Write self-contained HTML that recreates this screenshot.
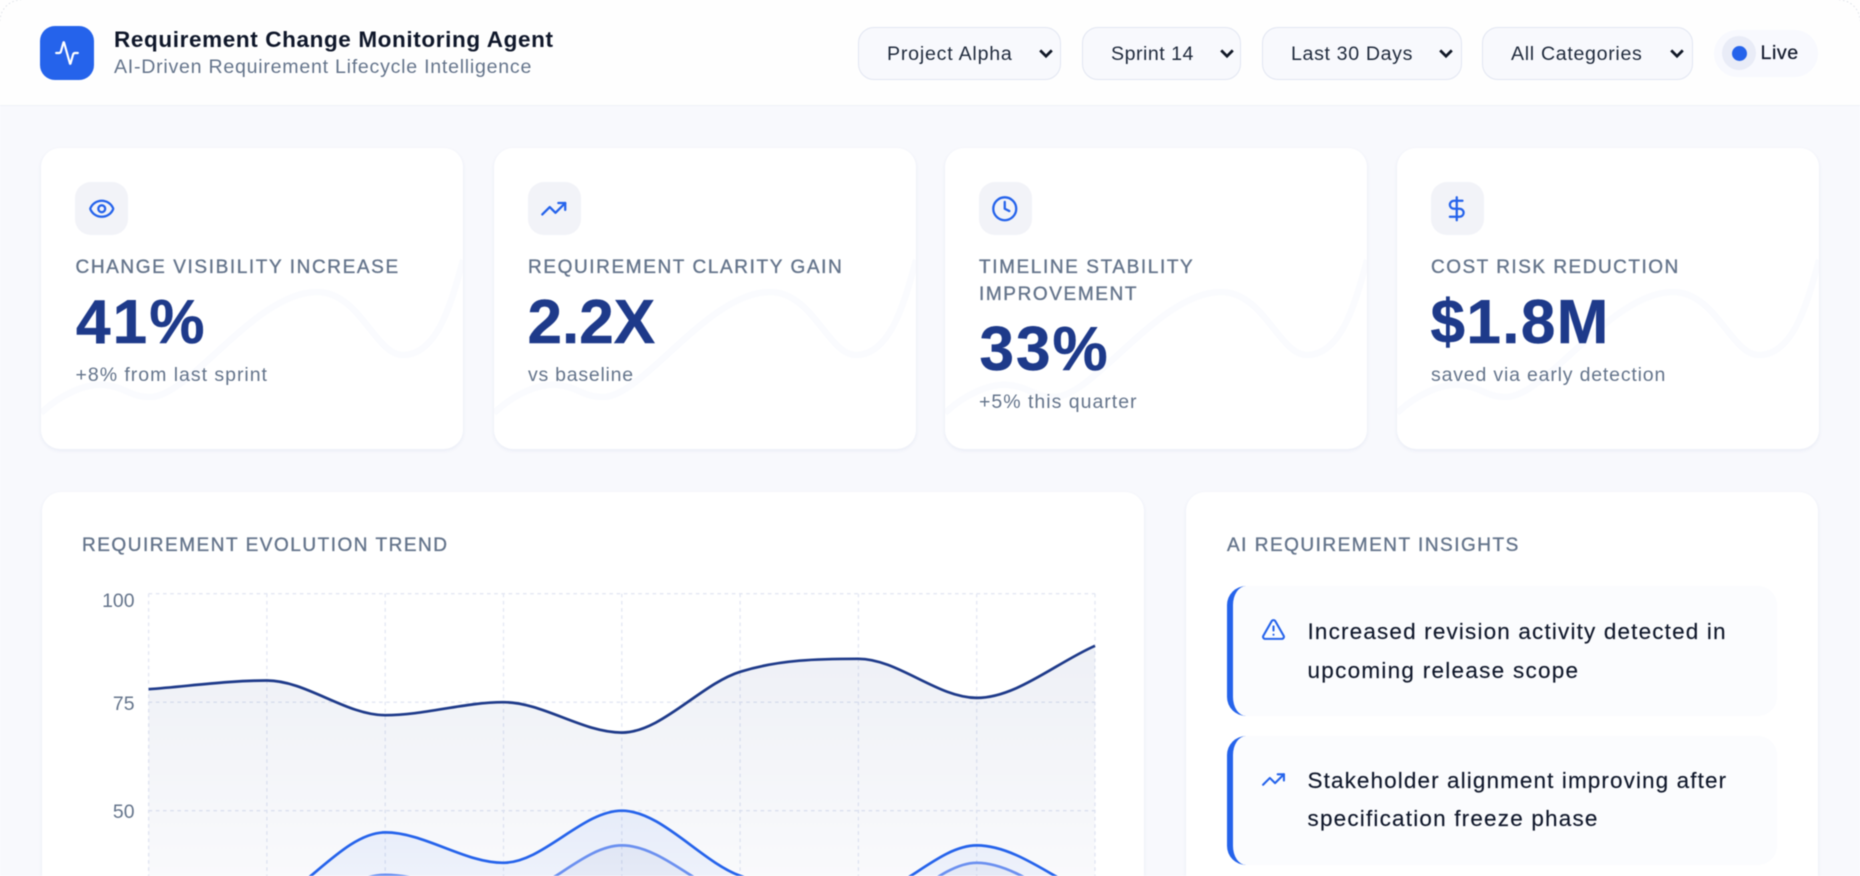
<!DOCTYPE html>
<html>
<head>
<meta charset="utf-8">
<title>Requirement Change Monitoring Agent</title>
<style>
html,body{margin:0;padding:0;width:1860px;height:876px;overflow:hidden;background:#fff}
*{box-sizing:border-box}
#p{position:relative;width:1860px;height:876px;overflow:hidden;background:#f8f9fd;font-family:"Liberation Sans",sans-serif;filter:blur(.45px)}
.t{position:absolute;white-space:nowrap}
#hd{position:absolute;left:0;top:0;width:1860px;height:106px;background:#fefefe;border-bottom:1.5px solid #eff1f8}
#logo{position:absolute;left:40px;top:26px;width:54px;height:54px;border-radius:15px;background:#2563eb}
#logo svg{position:absolute;left:14px;top:14px}
.sel{position:absolute;top:27px;height:53px;background:#f8f9fd;border:1.6px solid #e2e6f2;border-radius:16px}
.st{font-size:19.6px;line-height:24px;color:#1e293b;top:41.5px}
.chev{position:absolute;top:48px}
#live{position:absolute;left:1714px;top:30px;width:104px;height:47px;border-radius:24px;background:#f8f9fe}
#ring{position:absolute;left:1722px;top:36px;width:34px;height:34px;border-radius:50%;background:#e9ecf7}
#dot{position:absolute;left:1731.5px;top:45.5px;width:15px;height:15px;border-radius:50%;background:#2563eb}
.card{position:absolute;top:148px;width:422px;height:301px;background:#fff;border-radius:19px;box-shadow:0 1.5px 4px rgba(30,58,138,.07);overflow:hidden}
.card svg.w{position:absolute;left:0;top:0}
.ib{position:absolute;left:34px;top:34px;width:53px;height:53px;border-radius:16px;background:#f2f3f8}
.ib svg{position:absolute;left:12.75px;top:12.75px}
.lb{left:34.5px;font-size:19px;line-height:27px;color:#64748b;letter-spacing:1.6px;-webkit-text-stroke:.35px #64748b}
.vl{left:34px;font-size:62px;line-height:70px;font-weight:700;color:#1e3a8a;-webkit-text-stroke:.5px #1e3a8a}
.sb{left:34.5px;font-size:19.5px;line-height:24px;color:#64748b}
.panel{position:absolute;top:492px;height:384px;background:#fff;border-radius:19px 19px 0 0;box-shadow:0 1.5px 4px rgba(30,58,138,.07)}
.pt{font-size:19px;line-height:24px;top:534px;color:#64748b;letter-spacing:1.52px;-webkit-text-stroke:.35px #64748b}
.ins{position:absolute;left:1227px;width:550px;background:#fbfcfe;border-left:6.2px solid #2563eb;border-radius:19px}
.it{left:1307.5px;font-size:22.5px;line-height:38px;color:#0f172a;-webkit-text-stroke:.15px #0f172a}
.yl{right:1725.5px;font-size:19.4px;line-height:24px;color:#64748b}
</style>
</head>
<body>
<div id="p">
  <div id="hd"></div>
  <div id="logo"><svg width="26" height="26" viewBox="0 0 24 24" fill="none" stroke="#fff" stroke-width="2" stroke-linecap="round" stroke-linejoin="round"><path d="M22 12h-2.48a2 2 0 0 0-1.93 1.46l-2.35 8.36a.25.25 0 0 1-.48 0L9.24 2.18a.25.25 0 0 0-.48 0l-2.35 8.36A2 2 0 0 1 4.49 12H2"/></svg></div>
  <div class="t" style="left:114px;top:27px;font-size:22.5px;line-height:26px;font-weight:700;color:#0f172a;letter-spacing:.62px">Requirement Change Monitoring Agent</div>
  <div class="t" style="left:114px;top:55px;font-size:19.6px;line-height:24px;color:#64748b;letter-spacing:.74px">AI-Driven Requirement Lifecycle Intelligence</div>

  <div class="sel" style="left:858px;width:203px"></div>
  <div class="sel" style="left:1082px;width:159px"></div>
  <div class="sel" style="left:1262px;width:200px"></div>
  <div class="sel" style="left:1482px;width:211px"></div>
  <div class="t st" style="left:887px;letter-spacing:.78px">Project Alpha</div>
  <div class="t st" style="left:1111px;letter-spacing:.5px">Sprint 14</div>
  <div class="t st" style="left:1291px;letter-spacing:.64px">Last 30 Days</div>
  <div class="t st" style="left:1511px;letter-spacing:.68px">All Categories</div>
  <svg class="chev" style="left:1038px" width="16" height="11" viewBox="0 0 16 11"><path d="M2.2 2.4 8 8.2l5.8-5.8" fill="none" stroke="#111827" stroke-width="2.8"/></svg>
  <svg class="chev" style="left:1219px" width="16" height="11" viewBox="0 0 16 11"><path d="M2.2 2.4 8 8.2l5.8-5.8" fill="none" stroke="#111827" stroke-width="2.8"/></svg>
  <svg class="chev" style="left:1438px" width="16" height="11" viewBox="0 0 16 11"><path d="M2.2 2.4 8 8.2l5.8-5.8" fill="none" stroke="#111827" stroke-width="2.8"/></svg>
  <svg class="chev" style="left:1669px" width="16" height="11" viewBox="0 0 16 11"><path d="M2.2 2.4 8 8.2l5.8-5.8" fill="none" stroke="#111827" stroke-width="2.8"/></svg>

  <div id="live"></div><div id="ring"></div><div id="dot"></div>
  <div class="t" style="left:1760.5px;top:41px;font-size:19.6px;line-height:24px;color:#0f172a;letter-spacing:.55px;-webkit-text-stroke:.25px #0f172a">Live</div>

  <!-- KPI cards -->
  <div class="card" style="left:41px">
    <svg class="w" width="422" height="301" fill="none"><path d="M0 265C19 247 44 235 64 237C84 239 89 249 109 249C149 249 214 144 276 144C319 144 334 207 362 207C394 207 409 162 422 112" stroke="#fafbfe" stroke-width="6.5"/></svg>
    <div class="ib"><svg width="27.5" height="27.5" viewBox="0 0 24 24" fill="none" stroke="#2563eb" stroke-width="2" stroke-linecap="round" stroke-linejoin="round"><path d="M2.062 12.348a1 1 0 0 1 0-.696 10.75 10.75 0 0 1 19.876 0 1 1 0 0 1 0 .696 10.75 10.75 0 0 1-19.876 0"/><circle cx="12" cy="12" r="3"/></svg></div>
    <div class="t lb" style="top:106px">CHANGE VISIBILITY INCREASE</div>
    <div class="t vl" style="left:35px;top:140px;letter-spacing:2.2px">41%</div>
    <div class="t sb" style="top:215px;letter-spacing:.98px">+8% from last sprint</div>
  </div>
  <div class="card" style="left:493.5px">
    <svg class="w" width="422" height="301" fill="none"><path d="M0 265C19 247 44 235 64 237C84 239 89 249 109 249C149 249 214 144 276 144C319 144 334 207 362 207C394 207 409 162 422 112" stroke="#fafbfe" stroke-width="6.5"/></svg>
    <div class="ib"><svg width="27.5" height="27.5" viewBox="0 0 24 24" fill="none" stroke="#2563eb" stroke-width="2" stroke-linecap="round" stroke-linejoin="round"><path d="M16 7h6v6"/><path d="m22 7-8.5 8.5-5-5L2 17"/></svg></div>
    <div class="t lb" style="top:106px">REQUIREMENT CLARITY GAIN</div>
    <div class="t vl" style="top:140px;letter-spacing:0">2.2X</div>
    <div class="t sb" style="top:215px;letter-spacing:.75px">vs baseline</div>
  </div>
  <div class="card" style="left:944.5px">
    <svg class="w" width="422" height="301" fill="none"><path d="M0 265C19 247 44 235 64 237C84 239 89 249 109 249C149 249 214 144 276 144C319 144 334 207 362 207C394 207 409 162 422 112" stroke="#fafbfe" stroke-width="6.5"/></svg>
    <div class="ib"><svg width="27.5" height="27.5" viewBox="0 0 24 24" fill="none" stroke="#2563eb" stroke-width="2" stroke-linecap="round" stroke-linejoin="round"><circle cx="12" cy="12" r="10"/><path d="M12 6v6l4 2"/></svg></div>
    <div class="t lb" style="top:106px">TIMELINE STABILITY</div>
    <div class="t lb" style="top:133px">IMPROVEMENT</div>
    <div class="t vl" style="left:35px;top:167px;letter-spacing:2px">33%</div>
    <div class="t sb" style="top:242px;letter-spacing:1px">+5% this quarter</div>
  </div>
  <div class="card" style="left:1396.5px">
    <svg class="w" width="422" height="301" fill="none"><path d="M0 265C19 247 44 235 64 237C84 239 89 249 109 249C149 249 214 144 276 144C319 144 334 207 362 207C394 207 409 162 422 112" stroke="#fafbfe" stroke-width="6.5"/></svg>
    <div class="ib"><svg width="27.5" height="27.5" viewBox="0 0 24 24" fill="none" stroke="#2563eb" stroke-width="2" stroke-linecap="round" stroke-linejoin="round"><path d="M12 2v20"/><path d="M17 5H9.5a3.5 3.5 0 0 0 0 7h5a3.5 3.5 0 0 1 0 7H6"/></svg></div>
    <div class="t lb" style="top:106px;letter-spacing:1.5px">COST RISK REDUCTION</div>
    <div class="t vl" style="top:140px;letter-spacing:1.4px">$1.8M</div>
    <div class="t sb" style="top:215px;letter-spacing:.82px">saved via early detection</div>
  </div>

  <!-- Chart panel -->
  <div class="panel" style="left:41.5px;width:1102.5px"></div>
  <div class="t pt" style="left:82px">REQUIREMENT EVOLUTION TREND</div>
  <div class="t yl" style="top:588.5px">100</div>
  <div class="t yl" style="top:691.5px">75</div>
  <div class="t yl" style="top:800px">50</div>
  <svg style="position:absolute;left:0;top:0" width="1860" height="876" fill="none">
    <defs>
      <linearGradient id="g1" gradientUnits="userSpaceOnUse" x1="0" y1="640" x2="0" y2="1000"><stop offset="0" stop-color="#1e3a8a" stop-opacity=".075"/><stop offset="1" stop-color="#1e3a8a" stop-opacity="0"/></linearGradient>
      <linearGradient id="g2" gradientUnits="userSpaceOnUse" x1="0" y1="800" x2="0" y2="1030"><stop offset="0" stop-color="#2563eb" stop-opacity=".08"/><stop offset="1" stop-color="#2563eb" stop-opacity="0"/></linearGradient>
      <linearGradient id="g3" gradientUnits="userSpaceOnUse" x1="0" y1="840" x2="0" y2="1030"><stop offset="0" stop-color="#1e3a8a" stop-opacity=".05"/><stop offset="1" stop-color="#1e3a8a" stop-opacity="0"/></linearGradient>
    </defs>
    <g stroke="#e3e7f3" stroke-width="1.3" stroke-dasharray="3.6 3.6">
      <path d="M148.6 593.7H1095M148.6 702.2H1095M148.6 810.7H1095"/>
      <path d="M148.6 593.7V876M266.9 593.7V876M385.2 593.7V876M503.5 593.7V876M621.8 593.7V876M740.1 593.7V876M858.4 593.7V876M976.7 593.7V876M1095 593.7V876"/>
    </g>
    <path fill="url(#g1)" d="M148.6 689.2C188 686.3 227.5 680.5 266.9 680.5C306.3 680.5 345.8 715.2 385.2 715.2C424.6 715.2 464.1 702.2 503.5 702.2C542.9 702.2 582.4 732.6 621.8 732.6C661.2 732.6 700.7 684.1 740.1 671.8C779.5 659.5 819 658.8 858.4 658.8C897.8 658.8 937.3 697.9 976.7 697.9C1016.1 697.9 1055.6 663.2 1095 645.8V876H148.6Z"/>
    <path fill="url(#g2)" d="M148.6 932.2C188 923.5 227.5 922.8 266.9 906.2C306.3 889.6 345.8 832.4 385.2 832.4C424.6 832.4 464.1 862.8 503.5 862.8C542.9 862.8 582.4 810.7 621.8 810.7C661.2 810.7 700.7 861.3 740.1 875.8C779.5 890.3 819 897.5 858.4 897.5C897.8 897.5 937.3 845.4 976.7 845.4C1016.1 845.4 1055.6 880.1 1095 897.5V1028H148.6Z"/>
    <path fill="url(#g3)" d="M148.6 949.6C188 943.8 227.5 944.9 266.9 932.2C306.3 919.5 345.8 874.8 385.2 874.8C424.6 874.8 464.1 897.5 503.5 897.5C542.9 897.5 582.4 845.4 621.8 845.4C661.2 845.4 700.7 889.5 740.1 901.8C779.5 914.1 819 919.2 858.4 919.2C897.8 919.2 937.3 862.8 976.7 862.8C1016.1 862.8 1055.6 900.4 1095 919.2V1028H148.6Z"/>
    <path stroke="#1e3a8a" stroke-width="2.7" d="M148.6 689.2C188 686.3 227.5 680.5 266.9 680.5C306.3 680.5 345.8 715.2 385.2 715.2C424.6 715.2 464.1 702.2 503.5 702.2C542.9 702.2 582.4 732.6 621.8 732.6C661.2 732.6 700.7 684.1 740.1 671.8C779.5 659.5 819 658.8 858.4 658.8C897.8 658.8 937.3 697.9 976.7 697.9C1016.1 697.9 1055.6 663.2 1095 645.8"/>
    <path stroke="#2563eb" stroke-width="2.7" d="M148.6 932.2C188 923.5 227.5 922.8 266.9 906.2C306.3 889.6 345.8 832.4 385.2 832.4C424.6 832.4 464.1 862.8 503.5 862.8C542.9 862.8 582.4 810.7 621.8 810.7C661.2 810.7 700.7 861.3 740.1 875.8C779.5 890.3 819 897.5 858.4 897.5C897.8 897.5 937.3 845.4 976.7 845.4C1016.1 845.4 1055.6 880.1 1095 897.5"/>
    <path stroke="#6b90f0" stroke-width="2.7" d="M148.6 949.6C188 943.8 227.5 944.9 266.9 932.2C306.3 919.5 345.8 874.8 385.2 874.8C424.6 874.8 464.1 897.5 503.5 897.5C542.9 897.5 582.4 845.4 621.8 845.4C661.2 845.4 700.7 889.5 740.1 901.8C779.5 914.1 819 919.2 858.4 919.2C897.8 919.2 937.3 862.8 976.7 862.8C1016.1 862.8 1055.6 900.4 1095 919.2"/>
  </svg>

  <!-- Insights panel -->
  <div class="panel" style="left:1186px;width:632px"></div>
  <div class="t pt" style="left:1227px;letter-spacing:1.5px">AI REQUIREMENT INSIGHTS</div>
  <div class="ins" style="top:585.5px;height:130.5px"></div>
  <div class="ins" style="top:736px;height:129px"></div>
  <svg style="position:absolute;left:1261px;top:616.5px" width="25" height="25" viewBox="0 0 24 24" fill="none" stroke="#2563eb" stroke-width="2" stroke-linecap="round" stroke-linejoin="round"><path d="m21.73 18-8-14a2 2 0 0 0-3.48 0l-8 14A2 2 0 0 0 4 21h16a2 2 0 0 0 1.73-3"/><path d="M12 9v4"/><path d="M12 17h.01"/></svg>
  <svg style="position:absolute;left:1261px;top:767px" width="25" height="25" viewBox="0 0 24 24" fill="none" stroke="#2563eb" stroke-width="2" stroke-linecap="round" stroke-linejoin="round"><path d="M16 7h6v6"/><path d="m22 7-8.5 8.5-5-5L2 17"/></svg>
  <div class="t it" style="top:612.5px;letter-spacing:1.16px">Increased revision activity detected in</div>
  <div class="t it" style="top:651.5px;letter-spacing:1.27px">upcoming release scope</div>
  <div class="t it" style="top:762px;letter-spacing:1.1px">Stakeholder alignment improving after</div>
  <div class="t it" style="top:800px;letter-spacing:1.19px">specification freeze phase</div>

  <!-- corner arcs -->
  <svg style="position:absolute;left:0;top:0" width="1860" height="40" fill="none" stroke="#dde1e8" stroke-width="1" stroke-dasharray="1.5 2.5"><path d="M0 21A21 21 0 0 1 21 0"/><path d="M1839 0A21 21 0 0 1 1860 21"/></svg>
</div>
</body>
</html>
